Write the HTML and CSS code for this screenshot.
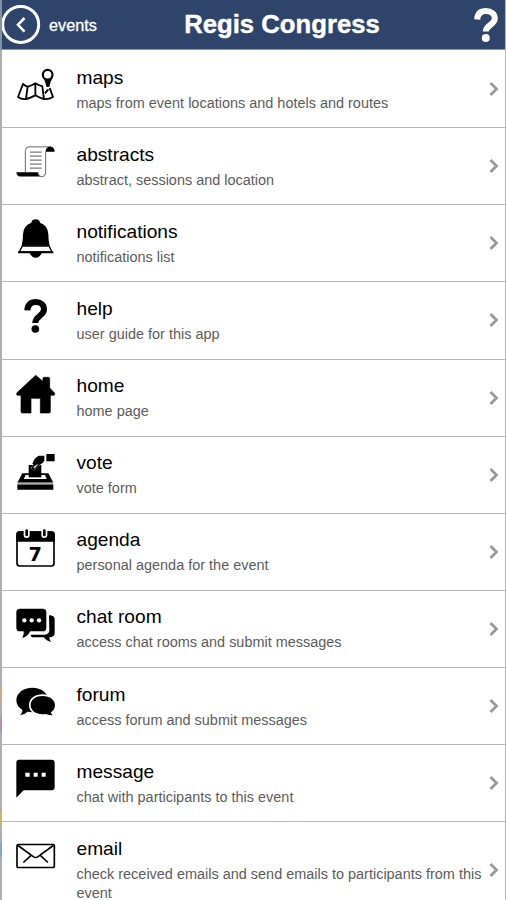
FILE: index.html
```html
<!DOCTYPE html>
<html lang="en">
<head>
<meta charset="utf-8">
<title>Regis Congress</title>
<link rel="stylesheet" href="styles.css">
</head>
<body>
<div class="app">
  <header class="header">
    <a class="back">
      <svg class="back-icon" viewBox="0 0 40 42"><circle cx="18.7" cy="20.4" r="18" fill="none" stroke="#fff" stroke-width="3"/><path d="M22.5 14l-6.5 6.8 6.5 6.8" fill="none" stroke="#fff" stroke-width="2.6"/></svg>
      <span class="back-label">events</span>
    </a>
    <h1 class="heading">Regis Congress</h1>
    <svg class="header-help" viewBox="0 0 24 36"><path d="M3.2 12.5C3.5 6.5 7 4 12 4s8.8 2.8 8.8 7.5c0 6.5-9 6.5-9 13" fill="none" stroke="#fff" stroke-width="6"/><circle cx="11.8" cy="31" r="4" fill="#fff"/></svg>
  </header>
  <ul class="menu">
    <li class="item">
      <svg class="icon" viewBox="6 153 225 231"><g fill="none" stroke="#000" stroke-width="5.5" stroke-linejoin="round"><path d="M129 259q-10-1-23-9-14 9-23 10-8-2-14-8L54 291q11 8 24 6 13-3 28-11 15 9 25 11 14 2 28-6l-10-27M83 260l-5 37M106 250v36M127 259l5 38M145 268l-10 12"/><circle cx="143" cy="224" r="14.5" stroke-width="6.5"/></g><path d="M128 232q6 7 15 7t16-7q-8 12-11 29h-8q-4-19-12-29z"/></svg>
      <div class="text"><h2 class="title">maps</h2><p class="sub">maps from event locations and hotels and routes</p></div>
      <svg class="chevron" viewBox="0 0 10 16"><path d="M1.5 2l6 6-6 6"/></svg>
    </li>
    <li class="item">
      <svg class="icon" viewBox="6 9.5 225 231"><path d="M76 143V77q0-11 11-11h66M137 80v64q-1 12-12 12-11-1-12-14" fill="#fff" stroke="#666" stroke-width="3"/><path d="M137 81q0-15 14-15 12 0 13 15zM49 142h64q1 11 10 13H61q-11-1-12-13z"/><path d="M90 82h35M90 94h35M90 106h35M90 118h35M90 130h35" stroke="#777" stroke-width="3.5"/></svg>
      <div class="text"><h2 class="title">abstracts</h2><p class="sub">abstract, sessions and location</p></div>
      <svg class="chevron" viewBox="0 0 10 16"><path d="M1.5 2l6 6-6 6"/></svg>
    </li>
    <li class="item">
      <svg class="icon" viewBox="6 241 225 231"><path d="M94 294q2-10 13-10t13 10q24 8 25 35 0 20 4 34H65q4-14 4-34 1-27 25-35zM89 384h36q-5 15-18 15t-18-15z"/><path d="M67 364h80l9 18H58z" fill="#fff" stroke="#000" stroke-width="4"/><path d="M54 386v-6h106v6z"/></svg>
      <div class="text"><h2 class="title">notifications</h2><p class="sub">notifications list</p></div>
      <svg class="chevron" viewBox="0 0 10 16"><path d="M1.5 2l6 6-6 6"/></svg>
    </li>
    <li class="item">
      <svg class="icon" viewBox="6 7 225 231"><path d="M82 92c1-17 11-25 25-25 15 0 25 8 25 22 0 20-26 19-26 41" fill="none" stroke="#000" stroke-width="18"/><circle cx="106" cy="148" r="11.5"/></svg>
      <div class="text"><h2 class="title">help</h2><p class="sub">user guide for this app</p></div>
      <svg class="chevron" viewBox="0 0 10 16"><path d="M1.5 2l6 6-6 6"/></svg>
    </li>
    <li class="item">
      <svg class="icon" viewBox="6 239 225 231"><path d="M107 285l22 18v-9q0-3 3-3h13q4 0 4 4v28l14 14q3 4-1 8h-11v49q0 4-4 4h-26v-44H93v44H67q-4 0-4-4v-49H52q-5-4-1-8z" stroke="#000" stroke-width="2" stroke-linejoin="round"/></svg>
      <div class="text"><h2 class="title">home</h2><p class="sub">home page</p></div>
      <svg class="chevron" viewBox="0 0 10 16"><path d="M1.5 2l6 6-6 6"/></svg>
    </li>
    <li class="item">
      <svg class="icon" viewBox="6 5 225 231"><path d="M139 56h25v22h-25zM67 114h78l15 28H52zM52 147h108v16H52z"/><path d="M77 119h58l5 12H71z" fill="#fff"/><path d="M86 89h38v37H86z"/><path d="M133 61v15q-4 9-15 13l-12 12q-8 6-11-1 0-6 6-12l-4-2q5-19 20-25z" stroke="#fff" stroke-width="2" paint-order="stroke"/><path d="M100 98q2-8 16-13l-11 14z" fill="#ddd"/><path d="M53 144.500h106" stroke="#aaa" stroke-width="6"/></svg>
      <div class="text"><h2 class="title">vote</h2><p class="sub">vote form</p></div>
      <svg class="chevron" viewBox="0 0 10 16"><path d="M1.5 2l6 6-6 6"/></svg>
    </li>
    <li class="item">
      <svg class="icon" viewBox="6 237 225 231"><rect x="51" y="291" width="111" height="102" rx="8" fill="#fff" stroke="#000" stroke-width="5"/><path d="M49 320v-22q0-9 9-9h98q8 0 8 9v22z"/><path d="M80 289v11M133 289v11" stroke="#fff" stroke-width="18" stroke-linecap="round"/><path d="M80 287v13M133 287v13" stroke="#000" stroke-width="8" stroke-linecap="round"/><text class="day" x="106" y="379" text-anchor="middle">7</text></svg>
      <div class="text"><h2 class="title">agenda</h2><p class="sub">personal agenda for the event</p></div>
      <svg class="chevron" viewBox="0 0 10 16"><path d="M1.5 2l6 6-6 6"/></svg>
    </li>
    <li class="item">
      <svg class="icon" viewBox="6 3 225 231"><path d="M60 56h68q11 0 11 11v46q0 11-11 11H91q-8 16-24 20 6-11 4-20H60q-11 0-11-11V67q0-11 11-11zM147 76q17 0 17 12v41q0 12-16 13 0 8 5 15-14-4-22-15H96q-4-3-4-8h42q14-1 14-14z"/><g fill="#fff"><circle cx="73" cy="91" r="6.5"/><circle cx="95" cy="91" r="6.5"/><circle cx="117" cy="91" r="6.5"/></g></svg>
      <div class="text"><h2 class="title">chat room</h2><p class="sub">access chat rooms and submit messages</p></div>
      <svg class="chevron" viewBox="0 0 10 16"><path d="M1.5 2l6 6-6 6"/></svg>
    </li>
    <li class="item">
      <svg class="icon" viewBox="6 235 225 231"><path d="M97 294c27 0 48 16 48 38s-21 36-48 36l-14-2q-10 10-24 11 9-7 8-17-18-10-18-28c0-22 21-38 48-38z"/><path d="M128 319c22 0 37 12 37 28q0 13-12 21 0 5 5 9-13 0-20-4c-26 4-46-8-46-26s15-28 36-28z" stroke="#fff" stroke-width="10" paint-order="stroke"/></svg>
      <div class="text"><h2 class="title">forum</h2><p class="sub">access forum and submit messages</p></div>
      <svg class="chevron" viewBox="0 0 10 16"><path d="M1.5 2l6 6-6 6"/></svg>
    </li>
    <li class="item">
      <svg class="icon" viewBox="6 16 225 231"><path d="M57 60h98q9 0 9 9v74q0 9-9 9H71l-22 22V69q0-9 8-9z"/><path d="M76 99h13v12H76zM101 99h12v12h-12zM125 99h12v12h-12z" fill="#fff"/></svg>
      <div class="text"><h2 class="title">message</h2><p class="sub">chat with participants to this event</p></div>
      <svg class="chevron" viewBox="0 0 10 16"><path d="M1.5 2l6 6-6 6"/></svg>
    </li>
    <li class="item item-tall">
      <svg class="icon" viewBox="6 247.5 225 231"><g fill="none" stroke="#000" stroke-width="5"><rect x="51" y="315" width="112" height="69" rx="4"/><path d="M54 318l47 34q6 4 12 0l47-34M70 369l24-22M144 369l-24-22"/></g></svg>
      <div class="text"><h2 class="title">email</h2><p class="sub">check received emails and send emails to participants from this event</p></div>
      <svg class="chevron" viewBox="0 0 10 16"><path d="M1.5 2l6 6-6 6"/></svg>
    </li>
  </ul>
</div>
</body>
</html>
```
FILE: styles.css
```css
* { box-sizing: border-box; margin: 0; padding: 0; }

body {
  height: 900px;
  overflow: hidden;
  background: #fff;
  font-family: "Liberation Sans", Arial, sans-serif;
  color: #000;
}

.app {
  height: 900px;
  overflow: hidden;
  padding-left: 2px;
  border-right: 1px solid #b5b5b8;
  background: linear-gradient(#8791a6 0 50px, #aeadb2 50px 686px, #d0a78c 686px 701px, #aeadb2 701px 717px, #b391b8 717px 732px, #aeadb2 732px 812px, #c5b576 812px 825px, #aeadb2 825px 842px, #7fa9ca 842px 857px, #aeadb2 857px) 0 0 / 2px 900px no-repeat;
}

.header {
  display: grid;
  grid-template-columns: 160px 1fr 104px;
  align-items: center;
  height: 50px;
  background: #2f446b;
  border-bottom: 1px solid #8f98a5;
  color: #fff;
}

.back { display: flex; align-items: center; gap: 7px; }
.back-icon { width: 40px; height: 42px; }
.back-label { padding-top: 1px; font-size: 16.3px; -webkit-text-stroke: 0.3px #fff; }

.heading {
  font-size: 25.7px;
  line-height: 30px;
  font-weight: bold;
  text-align: center;
  white-space: nowrap;
  padding: 0 0 2px 1px;
  -webkit-text-stroke: 0.4px #fff;
}

.header-help { width: 24px; height: 36px; justify-self: end; margin-right: 7px; }

.menu { list-style: none; padding-top: 1px; }

.item {
  display: flex;
  height: 77.15px;
  border-bottom: 1px solid #b5b6b8;
}

.item-tall { height: 96px; }

.icon { flex: none; width: 75px; height: 77px; }
.day { font: bold 58px "DejaVu Sans", sans-serif; }

.text { flex: 1; margin: 0 -4px 0 -0.5px; padding-top: 14.5px; }
.title { font-size: 19.15px; line-height: 24px; font-weight: normal; }
.sub { margin-top: 4px; font-size: 14.46px; line-height: 19px; color: #5c5c5c; }

.chevron {
  flex: none;
  align-self: center;
  width: 10px;
  height: 16px;
  margin: 0 6px 0 0;
  fill: none;
  stroke: #999;
  stroke-width: 2.8;
}
```
